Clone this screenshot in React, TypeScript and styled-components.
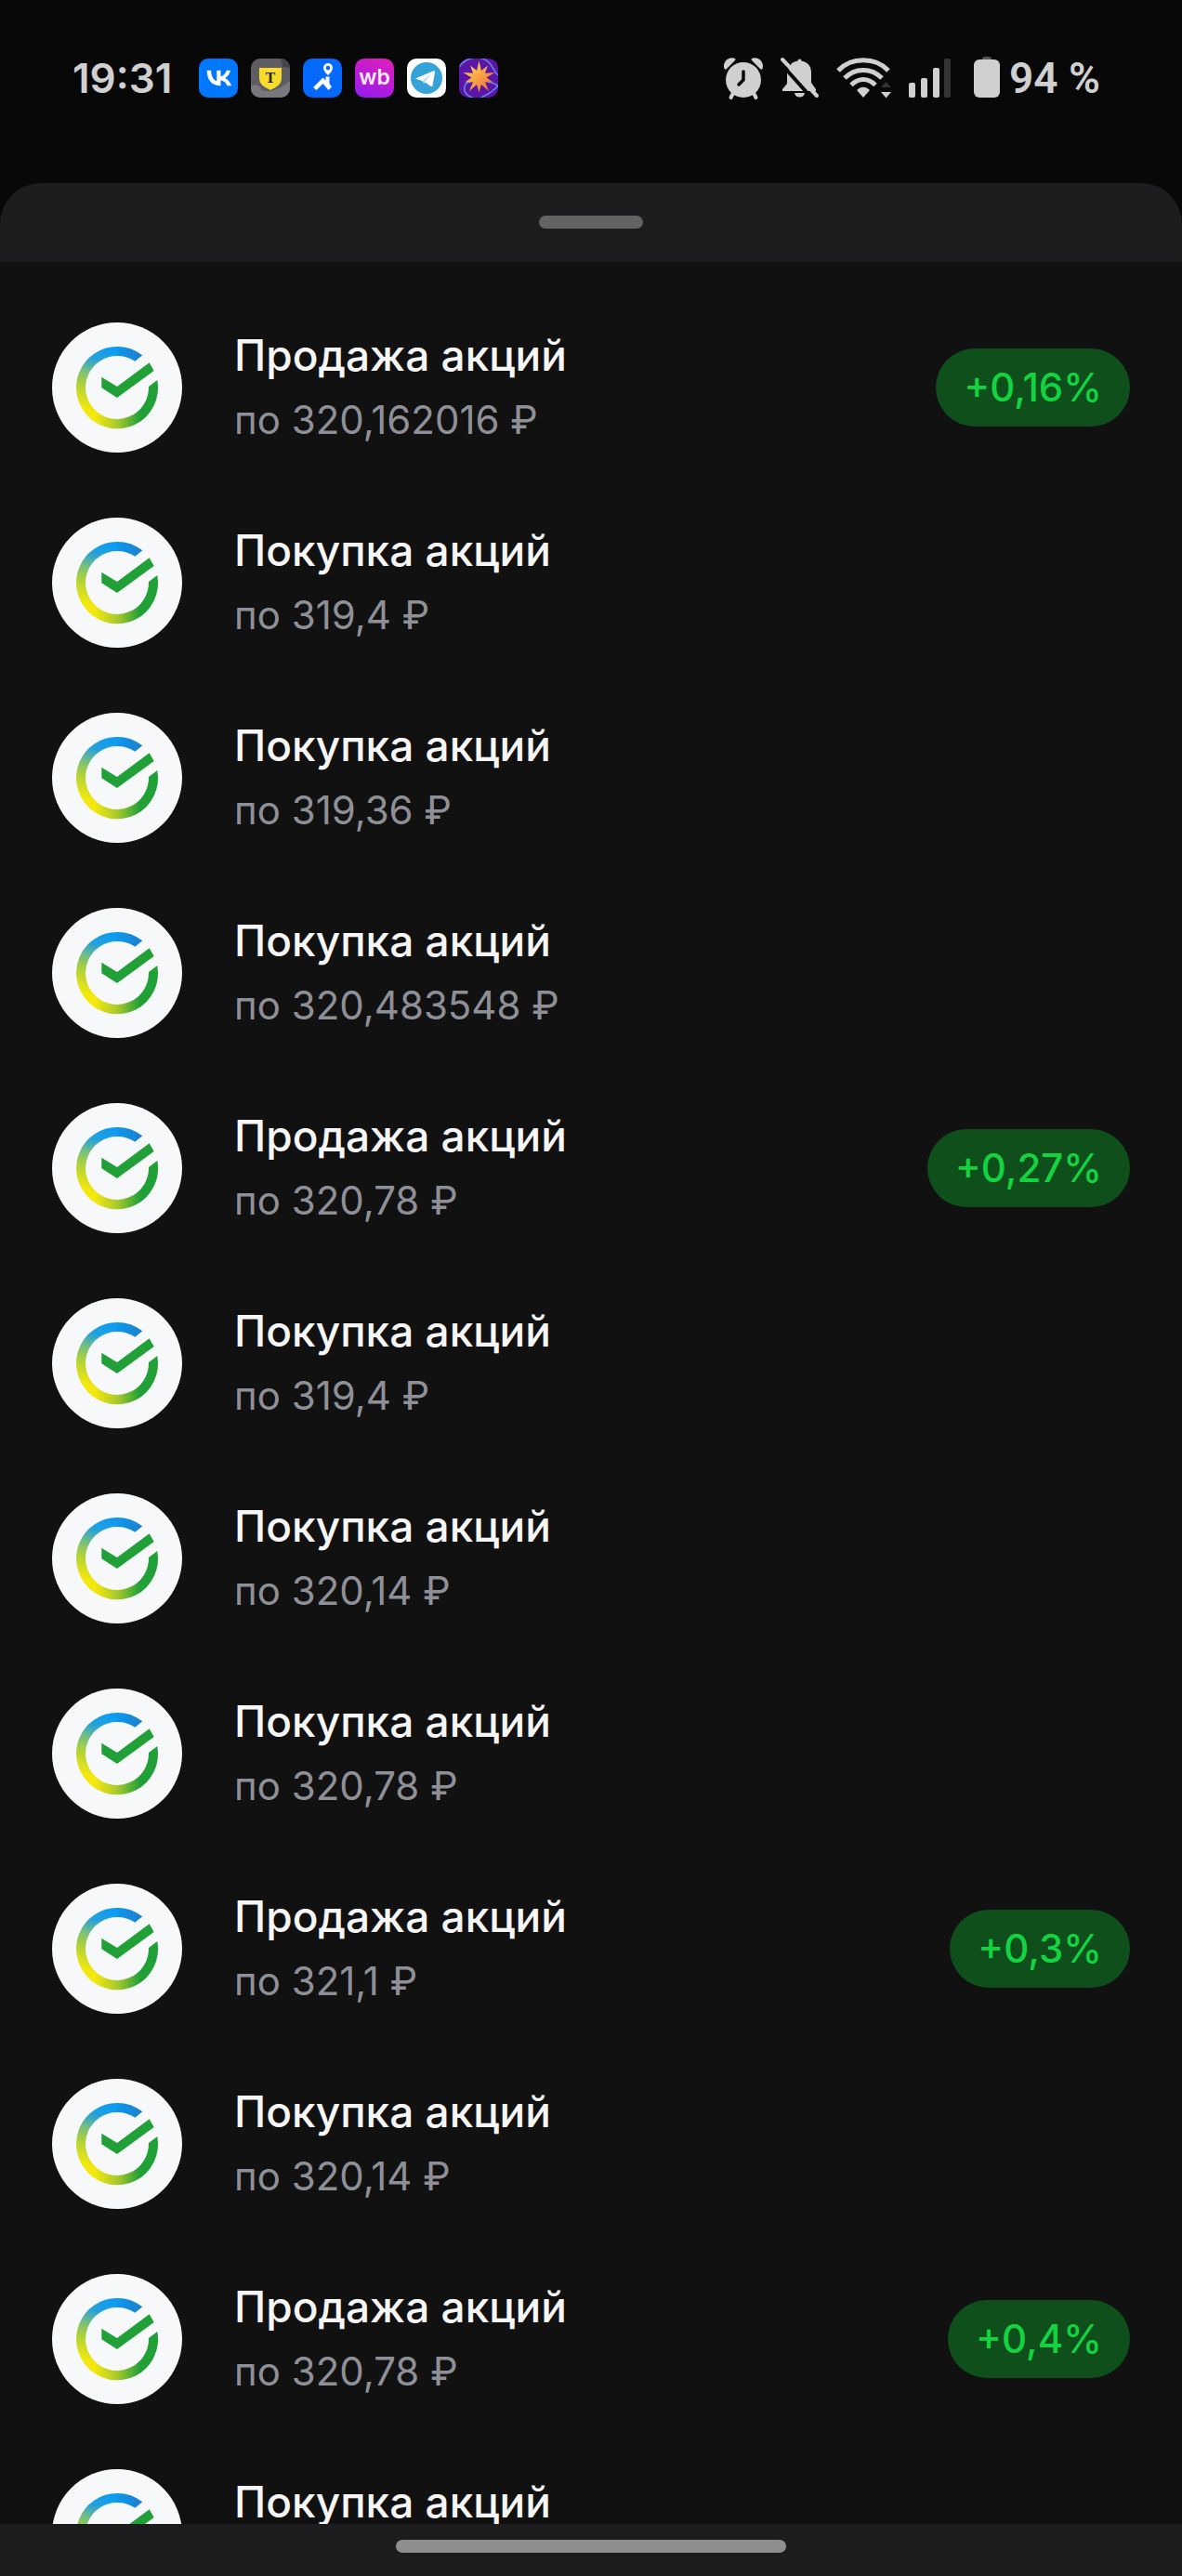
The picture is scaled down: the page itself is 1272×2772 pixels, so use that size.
import React, { useId } from "react";
import styled, { createGlobalStyle } from "styled-components";

const GlobalStyle = createGlobalStyle`
  * { box-sizing: border-box; }
  html, body { margin: 0; background: #080808; }
  body { font-family: Inter, Roboto, "Liberation Sans", sans-serif; }
`;

const Screen = styled.div`
  display: flex;
  flex-direction: column;
  height: 100vh;
  overflow: hidden;
  background: #080808;
`;

const StatusBar = styled.header`
  display: flex;
  flex: none;
  align-items: center;
  justify-content: space-between;
  height: 168px;
  margin-bottom: 29px;
  padding: 0 88px 0 78px;
  color: #d0d0d0;
`;

const StatusGroup = styled.div<{ $gap: number }>`
  display: flex;
  align-items: center;
  gap: ${(p) => p.$gap}px;
`;

const Clock = styled.time`
  min-width: 122px;
  font-size: 44px;
  line-height: 56px;
  font-weight: 600;
`;

const AppTile = styled.svg`
  display: block;
  width: 42px;
  height: 42px;
  border-radius: 10px;
`;

const StatusIcon = styled.svg<{ $width: number }>`
  display: block;
  width: ${(p) => p.$width}px;
  height: 48px;
  fill: currentColor;
`;

const Battery = styled.div`
  display: flex;
  align-items: center;
  gap: 10px;
  margin-left: 6px;
  font-family: Roboto, Inter, sans-serif;
  font-size: 46px;
  line-height: 56px;
  font-weight: 600;
`;

const Sheet = styled.main`
  display: flex;
  flex: 1;
  flex-direction: column;
  min-height: 0;
  overflow: hidden;
  border-radius: 44px 44px 0 0;
  background: #111111;
`;

const SheetHeader = styled.div`
  display: flex;
  flex: none;
  align-items: center;
  justify-content: center;
  height: 84px;
  background: #1d1d1f;
  box-shadow: 0 0 8px #1a1a1a;
`;

const Handle = styled.div`
  width: 112px;
  height: 14px;
  border-radius: 7px;
  background: #636363;
`;

const Deals = styled.ul`
  flex: 1;
  min-height: 0;
  margin: 0;
  padding: 31px 0 0;
  overflow: hidden;
  list-style: none;
`;

const Deal = styled.li`
  display: flex;
  align-items: center;
  gap: 56px;
  height: 210px;
  padding: 0 56px;
`;

const Avatar = styled.svg`
  flex: none;
  width: 140px;
  height: 140px;
  border-radius: 50%;
  background: #f7f8fa;
`;

const DealText = styled.div`
  flex: 1;
  min-width: 0;
  white-space: nowrap;
`;

const DealTitle = styled.div`
  color: #f6f6f6;
  font-size: 46px;
  line-height: 70px;
  font-weight: 500;
`;

const DealPrice = styled.div`
  color: #8f9097;
  font-size: 42px;
  line-height: 70px;
`;

const Profit = styled.span`
  flex: none;
  padding: 0 30px;
  border-radius: 42px;
  background: #0e4f1c;
  color: #14d341;
  font-size: 42px;
  line-height: 84px;
  font-weight: 500;
`;

const NavigationBar = styled.footer`
  display: flex;
  flex: none;
  justify-content: center;
  height: 56px;
  padding-top: 17px;
  background: #1d1d1f;
`;

const HomeIndicator = styled.div`
  width: 33%;
  height: 14px;
  border-radius: 7px;
  background: #8e8e8e;
`;

type DealData = { kind: "Покупка" | "Продажа"; price: string; profit?: string };

const deals: DealData[] = [
  { kind: "Продажа", price: "320,162016", profit: "+0,16%" },
  { kind: "Покупка", price: "319,4" },
  { kind: "Покупка", price: "319,36" },
  { kind: "Покупка", price: "320,483548" },
  { kind: "Продажа", price: "320,78", profit: "+0,27%" },
  { kind: "Покупка", price: "319,4" },
  { kind: "Покупка", price: "320,14" },
  { kind: "Покупка", price: "320,78" },
  { kind: "Продажа", price: "321,1", profit: "+0,3%" },
  { kind: "Покупка", price: "320,14" },
  { kind: "Продажа", price: "320,78", profit: "+0,4%" },
  { kind: "Покупка", price: "" },
];

function SberLogo() {
  const id = useId();
  return (
    <Avatar viewBox="0 0 140 140" aria-hidden="true">
      <defs>
        <linearGradient id={`${id}top`} gradientUnits="userSpaceOnUse" x1="66" y1="0" x2="97" y2="0">
          <stop offset="0" stopColor="#0b9bf4" />
          <stop offset="1" stopColor="#1c80ca" />
        </linearGradient>
        <linearGradient id={`${id}left`} gradientUnits="userSpaceOnUse" x1="62" y1="27" x2="42" y2="98">
          <stop offset="0" stopColor="#0b9bf4" />
          <stop offset="0.22" stopColor="#27a2d8" />
          <stop offset="0.42" stopColor="#75bf80" />
          <stop offset="0.6" stopColor="#a8cf3f" />
          <stop offset="0.95" stopColor="#f4e80e" />
        </linearGradient>
        <linearGradient id={`${id}bottom`} gradientUnits="userSpaceOnUse" x1="46" y1="0" x2="100" y2="0">
          <stop offset="0" stopColor="#f4e80e" />
          <stop offset="0.45" stopColor="#a8c92c" />
          <stop offset="0.9" stopColor="#21a038" />
        </linearGradient>
      </defs>
      <path fill={`url(#${id}top)`} d="M97.3 35.3A44 44 0 0 0 68 26V36A34 34 0 0 1 89.3 41.7Z" />
      <path fill={`url(#${id}bottom)`} d="M38 100.4A44 44 0 0 0 113.3 62L104 69A34 34 0 0 1 45.3 93.3Z" />
      <path fill={`url(#${id}left)`} d="M70 26A44 44 0 0 0 38.9 101.1L46 94A34 34 0 0 1 70 36Z" />
      <path fill="#21a038" d="M53.3 58.7L70 69L104.7 43.3L109.7 52L70 81L53.3 70.3Z" />
    </Avatar>
  );
}

function VkTile() {
  return (
    <AppTile viewBox="0 32 448 448" aria-label="VK">
      <rect y="32" width="448" height="448" fill="#0077ff" />
      <path
        fill="#fff"
        transform="translate(21 11) scale(0.94)"
        d="M75 168.3H126.7C128.4 253.8 166.1 290 196 297.4V168.3H244.2V242C273.7 238.8 304.6 205.2 315.1 168.3H363.3C359.3 187.4 351.5 205.6 340.2 221.6C328.9 237.6 314.5 251.1 297.7 261.2C316.4 270.5 332.9 283.6 346.1 299.8C359.4 315.9 369 334.6 374.5 354.7H321.4C316.6 337.3 306.6 321.6 292.9 309.8C279.1 297.9 262.2 290.4 244.2 288.1V354.7H238.4C136.3 354.7 78 284.7 75.5 168.3Z"
      />
    </AppTile>
  );
}

function BankTile() {
  return (
    <AppTile viewBox="0 0 42 42" aria-label="Банк">
      <rect width="42" height="42" fill="#5e5d64" />
      <path fill="#79787f" d="M0 30C7 26 9 30 12 34C20 37 30 34 42 24V42H0Z" />
      <path fill="#46454b" d="M32 0H42V10L34 9Z" />
      <path fill="#f8dc2c" d="M9 10H33V21C33 28 27 31 21 34C15 31 9 28 9 21Z" />
      <text x="21" y="26" textAnchor="middle" fill="#2e2a18" fontFamily="DejaVu Serif, serif" fontWeight="700" fontSize="14">T</text>
    </AppTile>
  );
}

function MapTile() {
  return (
    <AppTile viewBox="0 0 42 42" aria-label="Карты">
      <rect width="42" height="42" fill="#0568ff" />
      <path fill="#fff" fillRule="evenodd" d="M27 18C23.500 14.500 22 12.500 22 10A5 5 0 0 1 32 10C32 12.500 30.500 14.500 27 18ZM27 7.800A2.300 2.300 0 1 0 27 12.400A2.300 2.300 0 0 0 27 7.800Z" />
      <path fill="#fff" d="M11 31L21.500 20.500L24.500 23.500V19.500H28.500V27L31 30.500L27.500 34L21.500 27L14.500 34Z" />
    </AppTile>
  );
}

function ShopTile() {
  const id = useId();
  return (
    <AppTile viewBox="0 0 42 42" aria-label="Маркетплейс">
      <defs>
        <linearGradient id={id} x1="0.7" y1="0" x2="0.3" y2="1">
          <stop offset="0" stopColor="#db1ec0" />
          <stop offset="1" stopColor="#9a1bea" />
        </linearGradient>
      </defs>
      <rect width="42" height="42" fill={`url(#${id})`} />
      <text x="21" y="28" textAnchor="middle" fill="#fbeafc" fontFamily="Inter, sans-serif" fontWeight="600" fontSize="23">wb</text>
    </AppTile>
  );
}

function TelegramTile() {
  return (
    <AppTile viewBox="0 0 42 42" aria-label="Telegram">
      <rect width="42" height="42" fill="#fff" />
      <circle cx="21" cy="21" r="17" fill="#35a3d8" />
      <path fill="#fff" d="M9 21.500L28 13.500C29.500 13 30.200 13.500 30 14.700L27.500 29C27.200 30.300 26.500 30.500 25.400 29.700L18.500 25L16 24Z" />
      <path fill="#bcdcec" d="M16 24L26 17L19.500 24.500L18.500 27Z" />
    </AppTile>
  );
}

function StarTile() {
  const id = useId();
  const points = Array.from({ length: 20 }, (_, i) => {
    const radius = i % 2 ? 8 : i % 4 ? 16 : 18;
    const angle = (i * Math.PI) / 10 - Math.PI / 2;
    return `${21.5 + radius * Math.cos(angle)},${20.5 + radius * Math.sin(angle)}`;
  }).join(" ");
  return (
    <AppTile viewBox="0 0 42 42" aria-label="Игра">
      <defs>
        <linearGradient id={id} x1="0" y1="0" x2="1" y2="1">
          <stop offset="0.3" stopColor="#ffbd4f" />
          <stop offset="0.8" stopColor="#f0793c" />
        </linearGradient>
      </defs>
      <rect width="42" height="42" fill="#5a16a8" />
      <path fill="none" stroke="#6c86e0" strokeWidth="1.500" d="M0 9C10 -4 26 -3 33 5C37 10 39 16 42 18M42 29C28 22 8 22 6 30C4 39 14 43 20 43M22 43C28 40 37 36 42 29" />
      <polygon fill={`url(#${id})`} points={points} />
    </AppTile>
  );
}

function AlarmIcon() {
  return (
    <StatusIcon $width={44} viewBox="0 0 44 48" aria-label="Будильник">
      <path d="M1.500 14C-1 7 6 0 13 3Q14 4 12.500 5.500L4 14Q2.500 15.500 1.500 14ZM42.500 14C45 7 38 0 31 3Q30 4 31.500 5.500L40 14Q41.500 15.500 42.500 14Z" />
      <circle cx="22" cy="26" r="19" />
      <path fill="none" stroke="currentColor" strokeWidth="4" strokeLinecap="round" d="M11 40L8.500 45M33 40L35.500 45" />
      <path fill="none" stroke="#080808" strokeWidth="3.500" strokeLinecap="round" strokeLinejoin="round" d="M22 17V26L17 31" />
    </StatusIcon>
  );
}

function MutedBellIcon() {
  return (
    <StatusIcon $width={42} viewBox="0 0 42 48" aria-label="Без звука">
      <path d="M12 8Q15 6 18.500 5.500Q18.500 3.500 20.500 3.500T22.500 5.500C30 7 33 12 33 18V29L38 36V38H2V36L7 30V18Z" />
      <path d="M15 40H26Q25 44.500 20.500 44.500T15 40Z" />
      <path fill="none" stroke="#080808" strokeWidth="4" d="M0 8L35 47" />
      <path fill="none" stroke="currentColor" strokeWidth="4" strokeLinecap="round" d="M2 4L39 43" />
    </StatusIcon>
  );
}

function WifiIcon() {
  return (
    <StatusIcon $width={60} viewBox="0 0 60 48" aria-label="Wi-Fi">
      <g fill="none" stroke="currentColor" strokeWidth="5">
        <path d="M2 16C16 1 42 1 56 16" />
        <path d="M9 24C20 12.500 38 12.500 49 24" />
        <path d="M16 31.500C24 23.500 34 23.500 42 31.500" />
      </g>
      <path d="M22 37C26 32.500 32 32.500 36 37L29 45Z" />
      <path fill="#333" d="M48 34L53.500 28L59 34Z" />
      <path d="M48 39H59L53.500 45.500Z" />
    </StatusIcon>
  );
}

function SignalIcon() {
  return (
    <StatusIcon $width={46} viewBox="0 0 46 48" aria-label="Сигнал">
      <rect x="0" y="29" width="7" height="16" rx="2" />
      <rect x="13" y="24" width="7" height="21" rx="2" />
      <rect x="26" y="13" width="7" height="32" rx="2" />
      <rect x="38" y="3" width="7" height="42" rx="2" fill="#333" />
    </StatusIcon>
  );
}

function BatteryIcon() {
  return (
    <StatusIcon $width={28} viewBox="0 0 28 48" aria-hidden="true">
      <rect x="9" y="1" width="10" height="6" rx="3" fill="#555" />
      <rect x="0" y="4" width="28" height="41" rx="6" />
    </StatusIcon>
  );
}

export default function App() {
  return (
    <Screen>
      <GlobalStyle />
      <StatusBar>
        <StatusGroup $gap={14}>
          <Clock>19:31</Clock>
          <VkTile />
          <BankTile />
          <MapTile />
          <ShopTile />
          <TelegramTile />
          <StarTile />
        </StatusGroup>
        <StatusGroup $gap={18}>
          <AlarmIcon />
          <MutedBellIcon />
          <WifiIcon />
          <SignalIcon />
          <Battery>
            <BatteryIcon />
            <span>94 %</span>
          </Battery>
        </StatusGroup>
      </StatusBar>
      <Sheet>
        <SheetHeader>
          <Handle />
        </SheetHeader>
        <Deals>
          {deals.map((deal, index) => (
            <Deal key={index}>
              <SberLogo />
              <DealText>
                <DealTitle>{deal.kind} акций</DealTitle>
                <DealPrice>{deal.price ? `по ${deal.price} ₽` : "\u00a0"}</DealPrice>
              </DealText>
              {deal.profit && <Profit>{deal.profit}</Profit>}
            </Deal>
          ))}
        </Deals>
        <NavigationBar>
          <HomeIndicator />
        </NavigationBar>
      </Sheet>
    </Screen>
  );
}
